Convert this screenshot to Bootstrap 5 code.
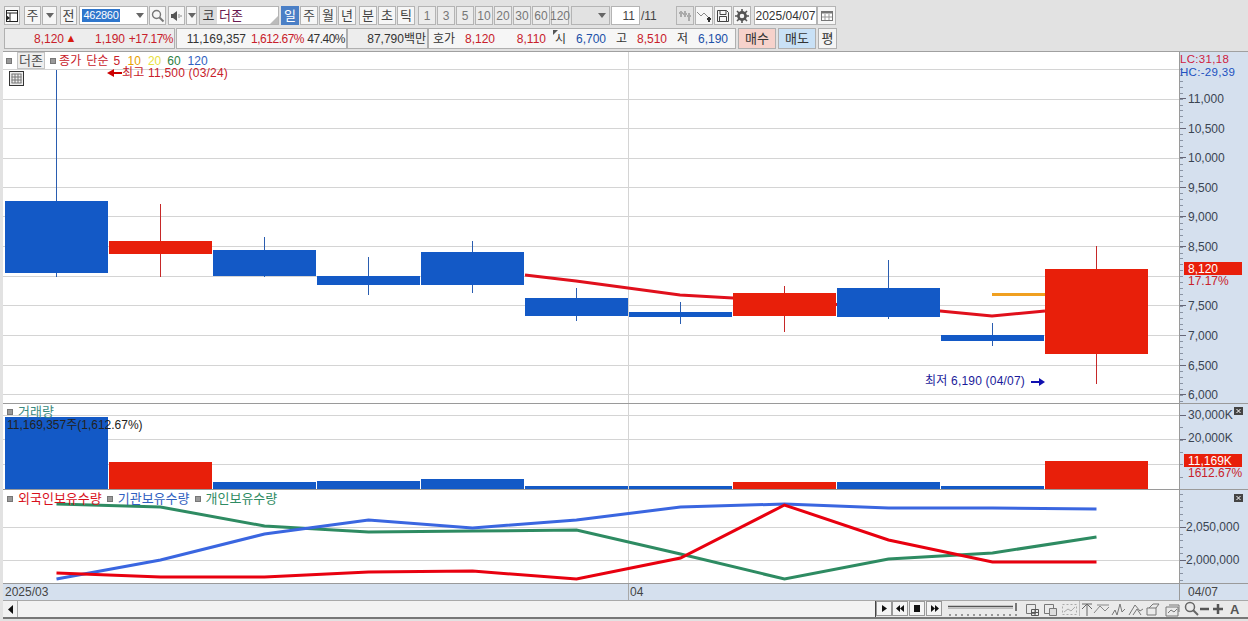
<!DOCTYPE html>
<html lang="ko">
<head>
<meta charset="UTF-8" />
<meta name="viewport" content="width=device-width, initial-scale=1" />
<title>더존 차트</title>
<link href="https://cdn.jsdelivr.net/npm/bootstrap@5.3.0/dist/css/bootstrap.min.css" rel="stylesheet" />
<style>
  html, body { height: 621px; overflow: hidden; }
  body { background: #e2e2e2; font: 12px/1 "Liberation Sans", "Noto Sans CJK KR", sans-serif; color: #333; }
  svg text { font: 12px "Liberation Sans", "Noto Sans CJK KR", sans-serif; }
  svg text.hc-lc { font-size: 11.5px; letter-spacing: .3px; }

  /* toolbars */
  .bar-one { height: 19px; margin: 6px 0 0 4px; gap: 2px; }
  .bar-two { height: 21px; margin: 3px 0 0 4px; }
  .tgrp { display: flex; gap: 1px; height: 100%; }
  .tb { height: 19px; border: 1px solid #b4b4b4; background: #f6f6f6; display: flex; align-items: center; justify-content: center; color: #444; flex: none; font-size: 13px; }
  .tb-on { background: #4a7fc6; border-color: #4a7fc6; color: #fff; }
  .tb-off { color: #777; background: #ececec; font-size: 12px; }
  .tb-blank { background: #e2e2e2; }
  .tb-white { background: #fff; }
  .w11 { width: 11px; } .w15 { width: 15px; } .w16 { width: 16px; } .w17 { width: 17px; } .w18 { width: 18px; }
  .w19 { width: 19px; } .w29 { width: 29px; } .w39 { width: 39px; } .w69 { width: 69px; } .w80 { width: 80px; }
  .sp1 { margin-left: 1px; } .sp2 { margin-left: 2px; } .sp11 { margin-left: 11px; } .pull1 { margin-left: -1px; }
  .code-sel { background: #2f76cc; color: #fff; padding: 1px 0; width: 38px; margin-left: 2px; font-size: 11px; letter-spacing: -.3px; text-align: center; }
  .code-box { justify-content: flex-start; }
  .drop-arrow { width: 0; height: 0; border: 4px solid transparent; border-top: 5px solid #666; border-bottom: 0; }
  .drop-arrow-at { margin-left: auto; margin-right: 3px; }
  .stock-tag { background: #ddd; width: 17px; height: 17px; display: flex; align-items: center; justify-content: center; color: #333; }
  .stock-name { color: #6a1a50; margin-left: 2px; }
  .stock-box { justify-content: flex-start; position: relative; }
  .corner-mark { position: absolute; right: 0; bottom: 0; width: 0; height: 0; border-left: 8px solid transparent; border-bottom: 8px solid #bbb; }
  .page-count { width: 22px; display: flex; align-items: center; color: #444; }
  .page-no { font-size: 12px; }
  .date-box { width: 63px; color: #333; font-size: 12px; }

  .quote { height: 21px; border: 1px solid #b0b0b0; display: flex; align-items: center; background: #ededed; flex: none; }
  .quote-lite { background: #f6f6f6; }
  .cell { flex: none; text-align: right; }
  .tight { letter-spacing: -.5px; }
  .up { color: #c8202a; } .dn { color: #2050a8; } .ink { color: #333; }
  .q1 { width: 171px; } .q2 { width: 171px; } .q3 { width: 81px; } .q4 { width: 308px; }
  .c59 { width: 59px; } .c14 { width: 14px; color: #d81c10; font-size: 11px; text-align: center; } .c48 { width: 48px; } .c47 { width: 47px; }
  .c69 { width: 69px; } .c58 { width: 58px; } .c41 { width: 41px; } .c78 { width: 78px; }
  .c26 { width: 26px; } .c40 { width: 40px; } .c51 { width: 51px; } .c9 { width: 9px; } .c10 { width: 10px; } .c11 { width: 11px; }
  .sijang { position: relative; text-align: center; }
  .sijang::before { content: ""; position: absolute; left: -2px; top: -3px; border-top: 5px solid #555; border-right: 5px solid transparent; }
  .order { height: 21px; display: flex; align-items: center; justify-content: center; border: 1px solid #b0b0b0; flex: none; color: #333; font-size: 13px; }
  .order-buy { width: 38px; margin-left: 2px; background: #f6d2cb; }
  .order-sell { width: 38px; margin-left: 2px; background: #c9e1f6; }
  .order-flat { width: 19px; margin-left: 2px; background: #f4f4f4; }

  /* chart panes */
  .chart-box { margin: 2px 0 0 3px; border-top: 1px solid #a0a0a0; }
  .pane { display: flex; position: relative; border-bottom: 1px solid #9a9a9a; }
  .pane-main { height: 352px; }
  .pane-vol { height: 86px; }
  .pane-own { height: 94px; }
  .pane-date { height: 17px; border-bottom-color: #a8a8a8; }
  .plot { width: 1176px; height: 100%; background: #fff; display: block; flex: none; }
  .plot-date { background: #d5e0ee; }
  .axis { width: 69px; height: 100%; background: #d5e0ee; display: block; flex: none; border-left: 1px solid #9a9a9a; }
  .legend { position: absolute; display: flex; align-items: center; white-space: nowrap; }
  .legend-main { left: 3px; top: 1px; height: 15px; gap: 3px; }
  .legend-vol { left: 4px; top: 1px; gap: 5px; }
  .legend-own { left: 4px; top: 2px; gap: 5px; }
  .legend-kr { font-size: 13px; }
  .vol-note { position: absolute; left: 4px; top: 15px; color: #222; }
  .dot { width: 6px; height: 6px; background: #999; border: 1px solid #777; flex: none; }
  .name-chip { background: #eee; border: 1px solid #c4c4c4; padding: 1px 1px; color: #555; margin: 0 2px; font-size: 13px; }
  .ma-name { word-spacing: 1px; letter-spacing: .3px; }
  .ma-gap { margin-left: 4px; }
  .ma-gap2 { margin-left: 3px; }
  .calc-btn { position: absolute; left: 6px; top: 19px; }
  .lbl-close { color: #c8202a; } .lbl-10 { color: #e8a000; } .lbl-20 { color: #e8e040; } .lbl-60 { color: #2e8040; } .lbl-120 { color: #3060c0; }
  .lbl-teal { color: #3a8a80; } .lbl-red { color: #d8101c; } .lbl-blue { color: #3060c0; } .lbl-green { color: #2e8b62; }

  /* bottom strip */
  .foot { height: 18px; margin-left: 3px; border-bottom: 2px solid #777; background: #eaeaea; display: flex; align-items: center; }
  .foot-left { width: 15px; height: 16px; background: #f2f2f2; border-right: 1px solid #aaa; display: flex; align-items: center; justify-content: center; }
  .foot-track { width: 858px; height: 16px; background: #f2f2f2; border-right: 1px solid #444; }
  .foot-tools { width: 368px; height: 16px; display: block; flex: none; }
</style>
</head>
<body>

<!-- 상단 툴바 -->
<div class="d-flex bar-one">
  <div class="tb w16">
    <svg width="14" height="14" viewBox="0 0 14 14"><rect x="1.5" y="1.5" width="11" height="11" fill="#fff" stroke="#222"/><path d="M1.5 4h11M5 4v8.5" stroke="#222"/><path d="M1 6l4 3-4 3z" fill="#222"/></svg>
  </div>
  <div class="tgrp sp2">
    <div class="tb w17">주</div>
    <div class="tb w15"><span class="drop-arrow"></span></div>
  </div>
  <div class="tb w17 sp1">전</div>
  <div class="tb tb-white w69 code-box"><span class="code-sel">462860</span><span class="drop-arrow drop-arrow-at"></span></div>
  <div class="tb w17 pull1">
    <svg width="14" height="14" viewBox="0 0 14 14"><circle cx="5.5" cy="5.5" r="4" fill="none" stroke="#777" stroke-width="1.4"/><path d="M8.5 8.5l4 4" stroke="#777" stroke-width="2"/></svg>
  </div>
  <div class="tgrp">
    <div class="tb w17">
      <svg width="14" height="14" viewBox="0 0 14 14"><path d="M1 5h2l4-3v10l-4-3H1z" fill="#555"/><path d="M9 5v4M11 6v2" stroke="#888"/></svg>
    </div>
    <div class="tb w11"><span class="drop-arrow"></span></div>
  </div>
  <div class="tb tb-white w80 stock-box"><span class="stock-tag">코</span><span class="stock-name">더존</span><span class="corner-mark"></span></div>
  <div class="tgrp">
    <div class="tb tb-on w18">일</div><div class="tb w18">주</div><div class="tb w18">월</div><div class="tb w18">년</div>
  </div>
  <div class="tgrp sp1">
    <div class="tb w18">분</div><div class="tb w18">초</div><div class="tb w18">틱</div>
  </div>
  <div class="tgrp sp1">
    <div class="tb tb-off w18">1</div><div class="tb tb-off w18">3</div><div class="tb tb-off w18">5</div><div class="tb tb-off w18">10</div>
    <div class="tb tb-off w18">20</div><div class="tb tb-off w18">30</div><div class="tb tb-off w18">60</div><div class="tb tb-off w18">120</div>
  </div>
  <div class="tb tb-blank w39"><span class="drop-arrow drop-arrow-at"></span></div>
  <div class="tb tb-white w29 justify-content-end pe-1 page-no pull1">11</div>
  <div class="page-count pull1">/11</div>
  <div class="tb tb-blank w18 sp11">
    <svg width="14" height="14" viewBox="0 0 14 14"><path d="M3 2v6M7 2v6M11 4v8M1 4h4M5 5h4M9 7h4" stroke="#aaa" stroke-width="2"/></svg>
  </div>
  <div class="tgrp">
    <div class="tb w18 pull1">
      <svg width="16" height="14" viewBox="0 0 16 14"><path d="M1 3l4 4 3-3 5 5" fill="none" stroke="#888"/><path d="M11 10h4M13 8v5" stroke="#333" stroke-width="2"/></svg>
    </div>
    <div class="tb w18">
      <svg width="14" height="14" viewBox="0 0 14 14"><path d="M1.5 1.5h9l2 2v9h-11z" fill="none" stroke="#444"/><path d="M4 1.5v4h6v-4M3.5 12.5v-5h7v5" fill="none" stroke="#444"/></svg>
    </div>
    <div class="tb w18">
      <svg width="14" height="14" viewBox="0 0 14 14"><circle cx="7" cy="7" r="3.6" fill="none" stroke="#555" stroke-width="2.6"/><path d="M7 0v3M7 11v3M0 7h3M11 7h3M2 2l2 2M10 10l2 2M12 2l-2 2M4 10l-2 2" stroke="#555" stroke-width="1.6"/></svg>
    </div>
  </div>
  <div class="tgrp sp1">
    <div class="tb tb-white date-box">2025/04/07</div>
    <div class="tb w19 pull1">
      <svg width="14" height="12" viewBox="0 0 14 12"><rect x="1.5" y="1.5" width="11" height="9" fill="#fff" stroke="#777"/><path d="M1.5 1.5h11v2h-11z" fill="#777"/><path d="M5 4v6M9 4v6M2 7h10" stroke="#999"/></svg>
    </div>
  </div>
</div>

<!-- 시세 줄 -->
<div class="d-flex bar-two">
  <div class="quote q1">
    <span class="cell c59 up">8,120</span><span class="cell c14">▲</span><span class="cell c47 up">1,190</span><span class="cell c48 up tight">+17.17%</span>
  </div>
  <div class="quote quote-lite q2 sp1">
    <span class="cell c69 ink">11,169,357</span><span class="cell c58 up tight">1,612.67%</span><span class="cell c41 ink tight">47.40%</span>
  </div>
  <div class="quote q3">
    <span class="cell c78 ink">87,790백만</span>
  </div>
  <div class="quote quote-lite q4">
    <span class="cell c26 ink">호가</span>
    <span class="cell c40 up">8,120</span><span class="cell c51 up">8,110</span>
    <span class="cell c9"></span><span class="cell c11 ink sijang">시</span>
    <span class="cell c40 dn">6,700</span><span class="cell c10"></span><span class="cell c11 ink">고</span>
    <span class="cell c40 up">8,510</span><span class="cell c10"></span><span class="cell c11 ink">저</span>
    <span class="cell c40 dn">6,190</span>
  </div>
  <div class="order order-buy">매수</div>
  <div class="order order-sell">매도</div>
  <div class="order order-flat">평</div>
</div>

<!-- 차트 -->
<div class="chart-box">
  <div class="pane pane-main">
    <svg class="plot" id="plotMain" viewBox="3 52 1176 351"></svg>
    <svg class="axis" id="axisMain" viewBox="1180 52 68 351"></svg>
    <div class="legend legend-main">
      <span class="dot"></span><span class="name-chip">더존</span><span class="dot"></span>
      <span class="lbl-close ma-name">종가 단순 5</span><span class="lbl-10 ma-gap">10</span><span class="lbl-20 ma-gap">20</span><span class="lbl-60 ma-gap2">60</span><span class="lbl-120 ma-gap">120</span>
    </div>
    <svg class="calc-btn" width="15" height="15" viewBox="0 0 15 15"><rect x=".5" y=".5" width="14" height="14" fill="#eee" stroke="#333"/><path d="M2.5 3h10M2.5 6h10M2.5 9h10M2.5 12h10M3 3v9M6 3v9M9 3v9M12 3v9" stroke="#777"/></svg>
  </div>
  <div class="pane pane-vol">
    <svg class="plot" id="plotVol" viewBox="3 404 1176 85"></svg>
    <svg class="axis" id="axisVol" viewBox="1180 404 68 85"></svg>
    <div class="legend legend-vol"><span class="dot"></span><span class="lbl-teal legend-kr">거래량</span></div>
    <div class="vol-note">11,169,357주(1,612.67%)</div>
  </div>
  <div class="pane pane-own">
    <svg class="plot" id="plotOwn" viewBox="3 490 1176 93"></svg>
    <svg class="axis" id="axisOwn" viewBox="1180 490 68 93"></svg>
    <div class="legend legend-own">
      <span class="dot"></span><span class="lbl-red legend-kr">외국인보유수량</span>
      <span class="dot"></span><span class="lbl-blue legend-kr">기관보유수량</span>
      <span class="dot"></span><span class="lbl-green legend-kr">개인보유수량</span>
    </div>
  </div>
  <div class="pane pane-date">
    <svg class="plot plot-date" viewBox="3 584 1176 16">
      <path d="M628.5 584v16" stroke="#a8a8a8"/>
      <text x="5" y="596" fill="#444">2025/03</text>
      <text x="630" y="596" fill="#444">04</text>
    </svg>
    <svg class="axis" viewBox="1180 584 68 16"><text x="1188" y="596" fill="#444">04/07</text></svg>
  </div>
</div>

<!-- 하단 스크롤 + 도구 -->
<div class="foot">
  <div class="foot-left"><svg width="7" height="9" viewBox="0 0 7 9"><path d="M6 0v9L1 4.5z" fill="#111"/></svg></div>
  <div class="foot-track"></div>
  <svg class="foot-tools" viewBox="877 601 368 16">
    <g fill="#f4f4f4" stroke="#999">
      <rect x="877.5" y="601.5" width="15" height="14"/><rect x="893.5" y="601.5" width="15" height="14"/>
      <rect x="910.5" y="601.5" width="15" height="14"/><rect x="927.5" y="601.5" width="15" height="14"/>
    </g>
    <g fill="#111">
      <path d="M883 605l5 3.5-5 3.5z"/>
      <path d="M901 605v7l-4-3.5zM905 605v7l-4-3.5z"/>
      <rect x="915" y="605" width="6" height="7"/>
      <path d="M932 605v7l4-3.5zM936 605v7l4-3.5z"/>
    </g>
    <path d="M949 606.5h65" stroke="#555" stroke-width="1.5"/>
    <path d="M949 608.5h65" stroke="#bbb"/>
    <path d="M1017 603v8" stroke="#777" stroke-width="2"/>
    <path d="M951 614v2M957 614v2M963 614v2M969 614v2M975 614v2M981 614v2M987 614v2M993 614v2M999 614v2M1005 614v2M1011 614v2M1017 614v2" stroke="#444"/>
    <g fill="none" stroke="#777">
      <path d="M1027.5 604.5h9v9h-9z"/><path d="M1032.5 609.5h7v6h-7zM1036 609.5v6M1032.5 612.5h7" stroke="#555"/>
      <path d="M1045.5 604.5h9v9h-9z"/><path d="M1050.5 608.5h7v7h-7z" fill="#ddd"/>
      <path d="M1063.5 604.5h14v10h-14z" stroke-dasharray="2 2" stroke="#aaa"/><path d="M1065 612l4-3 3 2 4-4" stroke="#aaa"/>
    </g>
    <path d="M1080.5 601v15" stroke="#bbb"/>
    <g fill="none" stroke="#666">
      <path d="M1083 604h10M1088 616v-11M1083 609l5-5 5 5"/>
      <path d="M1095 613l6-7 5 5 4-4M1098 605h12" stroke="#888"/>
      <path d="M1113 615l3-5 2 5 3-11 2 8 3-3" stroke="#777"/>
      <path d="M1130 615l6-10 5 6 3-2M1134 615l4-6 4 6" stroke="#777"/>
      <path d="M1148 608h9v7h-9zM1150 608l4-4h6l-3 4" stroke="#777"/>
      <path d="M1167 607h12v9h-12zM1170 605h10v7M1169 613l3-3 3 2 3-3" stroke="#777"/>
    </g>
    <circle cx="1191" cy="607" r="4.5" fill="none" stroke="#666" stroke-width="1.5"/>
    <path d="M1194 610l5 5" stroke="#666" stroke-width="2"/>
    <path d="M1201 609h9" stroke="#555" stroke-width="2.5"/>
    <path d="M1214 609h10M1219 604v10" stroke="#555" stroke-width="2.5"/>
    <text x="1231" y="614" fill="#555" style="font-weight:700;font-size:13px">A</text>
  </svg>
</div>

<script src="https://cdn.jsdelivr.net/npm/bootstrap@5.3.0/dist/js/bootstrap.bundle.min.js"></script>
<script>
  const BLUE = '#1359c6', RED = '#e81f0a';
  const candleX = i => 5 + i * 104;
  const candleMid = i => candleX(i) + 51.5;

  // [몸통 위, 몸통 아래, 꼬리 위, 꼬리 아래, 색]
  const candles = [
    [201, 273, 70, 277, BLUE],
    [241, 254, 204, 277, RED],
    [250, 276, 237, 277, BLUE],
    [276, 285, 257, 295, BLUE],
    [252, 285, 241, 293, BLUE],
    [298, 316, 288, 321, BLUE],
    [312, 317, 302, 324, BLUE],
    [293, 316, 286, 332, RED],
    [288, 317, 260, 319, BLUE],
    [335, 341, 323, 346, BLUE],
    [269, 354, 246, 384, RED]
  ];
  const volTops = [417, 462, 482, 481, 479, 486, 486, 482, 482, 486, 461];
  const ownLines = [
    ['#2e8b62', [504, 507, 526, 532, 531, 530, 554, 579, 559, 553, 537]],
    ['#3a66e0', [579, 560, 534, 520, 528, 520, 507, 504, 508, 508, 509]],
    ['#e8000f', [573, 577, 577, 572, 571, 579, 558, 505, 540, 562, 562]]
  ];

  function gridLines(ys) {
    return ys.map(y => `<path d="M3 ${y}.5H1179" stroke="#d4d4d4"/>`).join('') + '<path d="M628.5 0V620" stroke="#d4d4d4"/>';
  }

  // majors: [눈금 y, 글자, 글자 x, 글자 y 보정]
  function axisTicks(top, bottom, step, majors) {
    let out = '';
    for (let y = top; y < bottom; y += step) {
      out += `<path d="M1180 ${Math.round(y)}.5h3" stroke="#8a94a4"/>`;
    }
    majors.forEach(m => {
      out += `<path d="M1180 ${m[0]}.5h6" stroke="#667"/><text x="${m[2] || 1188}" y="${m[0] + 5 + (m[3] || 0)}" fill="#3a4452">${m[1]}</text>`;
    });
    return out;
  }

  // 가격 패널
  let main = gridLines([69, 99, 128, 158, 187, 216, 246, 276, 305, 335, 365, 394]);
  main += '<polyline points="525,275 576,281 680,295 733,298 940,311 992,316 1045,311" fill="none" stroke="#e0101c" stroke-width="3"/>';
  main += '<path d="M992 294.5H1045" stroke="#f0a020" stroke-width="3"/>';
  candles.forEach((c, i) => {
    const wick = c[4] === BLUE ? '#2a5db0' : '#c62828';
    main += `<path d="M${candleMid(i)} ${c[2]}V${c[3]}" stroke="${wick}"/>`;
    main += `<rect x="${candleX(i)}" y="${c[0]}" width="103" height="${c[1] - c[0]}" fill="${c[4]}"/>`;
  });
  main += '<path d="M107 73l7-4v3h8v2h-8v3z" fill="#c00"/><text x="122" y="77" fill="#c8202a" letter-spacing=".2">최고 11,500 (03/24)</text>';
  main += '<text x="925" y="385" fill="#1a1a9a" letter-spacing=".2">최저 6,190 (04/07)</text><path d="M1031 381h8v-3l6 4-6 4v-3h-8z" fill="#1010b0"/>';
  document.getElementById('plotMain').innerHTML = main;

  let mainAxis = axisTicks(69, 404, 5.92, [
    [98, '11,000'], [128, '10,500'], [157, '10,000'], [187, '9,500'], [216, '9,000'], [246, '8,500'],
    [305, '7,500'], [335, '7,000'], [365, '6,500'], [394, '6,000']
  ]);
  mainAxis += '<rect x="1180" y="52" width="68" height="15" fill="#d5e0ee"/><text class="hc-lc" x="1180" y="63" fill="#d02040">LC:31,18</text><text class="hc-lc" x="1180" y="76" fill="#2050c0">HC:-29,39</text>';
  mainAxis += '<rect x="1184" y="262" width="58" height="13" fill="#e81f0a"/><text x="1188" y="273" fill="#fff">8,120</text><text x="1188" y="285" fill="#c8202a">17.17%</text>';
  document.getElementById('axisMain').innerHTML = mainAxis;

  // 거래량 패널
  let vol = gridLines([415, 439, 464]);
  volTops.forEach((top, i) => {
    vol += `<rect x="${candleX(i)}" y="${top}" width="103" height="${489 - top}" fill="${candles[i][4]}"/>`;
  });
  document.getElementById('plotVol').innerHTML = vol;

  const closeMark = y => `<rect x="1234" y="${y}" width="9" height="8" fill="#444"/><path d="M1236.5 ${y + 2}l4 4m0-4l-4 4" stroke="#fff"/>`;
  let volAxis = axisTicks(415, 490, 12.3, [[415, '30,000K', 1188, -1], [439, '20,000K', 1188, -2]]) + closeMark(407);
  volAxis += '<rect x="1184" y="454" width="58" height="13" fill="#e81f0a"/><text x="1188" y="465" fill="#fff">11,169K</text><text x="1188" y="477" fill="#c8202a">1612.67%</text>';
  document.getElementById('axisVol').innerHTML = volAxis;

  // 보유수량 패널
  let own = gridLines([527, 560]);
  ownLines.forEach(line => {
    const pts = line[1].map((y, i) => `${candleMid(i)},${y}`).join(' ');
    own += `<polyline points="${pts}" fill="none" stroke="${line[0]}" stroke-width="3"/>`;
  });
  document.getElementById('plotOwn').innerHTML = own;
  document.getElementById('axisOwn').innerHTML = axisTicks(494, 584, 6.6, [[527, '2,050,000', 1186, -1], [560, '2,000,000', 1186, -1]]) + closeMark(494);
</script>
</body>
</html>
